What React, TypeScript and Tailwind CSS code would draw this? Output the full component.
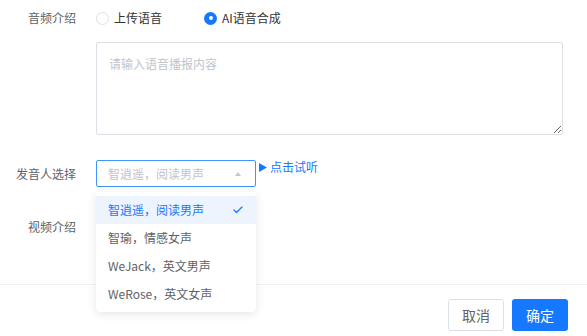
import { Check } from "lucide-react"

const voices = ["智逍遥，阅读男声", "智瑜，情感女声", "WeJack，英文男声", "WeRose，英文女声"]

export default function App() {
  return (
    <div className="relative w-[587px] h-[336px] bg-white text-[12px] font-['Noto_Sans_CJK_SC',sans-serif] text-[#606266]">
      <div className="h-[284px] pt-[8px]">
        {/* 音频介绍 */}
        <div className="flex items-center h-[20px]">
          <div className="w-[76px] mr-[20px] text-right">音频介绍</div>
          <label className="flex items-center text-[#333]">
            <span className="w-[13px] h-[13px] rounded-full border border-[#dcdfe6] bg-white" />
            <span className="ml-[5px]">上传语音</span>
          </label>
          <label className="flex items-center ml-[42px] text-[#333]">
            <span className="w-[13px] h-[13px] rounded-full bg-[#1677ff] flex items-center justify-center">
              <span className="w-[4px] h-[4px] rounded-full bg-white" />
            </span>
            <span className="ml-[5px]">AI语音合成</span>
          </label>
        </div>

        <div className="mt-[14px] ml-[96px]">
          <textarea
            className="block w-[467px] h-[93px] border border-[#dcdfe6] rounded-[2px] px-[12px] pt-[12px] leading-[18px] outline-none placeholder:text-[#c0c4cc] text-[12px]"
            placeholder="请输入语音播报内容"
          />
        </div>

        {/* 发音人选择 */}
        <div className="flex items-start mt-[25px]">
          <div className="w-[76px] mr-[20px] text-right leading-[27px]">发音人选择</div>
          <div className="relative">
            <div className="w-[160px] h-[27px] border border-[#4096ff] rounded-[2px] flex items-center pl-[11px] pr-[14px] justify-between">
              <span className="text-[#c0c4cc]">智逍遥，阅读男声</span>
              <svg width="6" height="4" viewBox="0 0 6 4">
                <path d="M3 0 L6 4 L0 4 Z" fill="#c0c4cc" />
              </svg>
            </div>
            <div className="absolute left-0 top-[32px] z-10 w-[160px] bg-white rounded-[4px] py-[4px] shadow-[0_2px_10px_rgba(0,0,0,0.1)]">
              {voices.map((v, i) => (
                <div
                  key={v}
                  className={
                    i === 0
                      ? "h-[28px] flex items-center justify-between pl-[12px] pr-[12px] bg-[#edf4fe] text-[#1677ff]"
                      : "h-[28px] flex items-center pl-[12px] text-[#606266]"
                  }
                >
                  <span>{v}</span>
                  {i === 0 && <Check size={12} strokeWidth={2.5} className="text-[#1677ff]" />}
                </div>
              ))}
            </div>
          </div>
          <button className="flex items-center ml-[3px] mt-[1px] text-[#1677ff] leading-[12px]">
            <svg width="8" height="9" viewBox="0 0 8 9" className="mr-[3px]">
              <path d="M0 0 L8 4.5 L0 9 Z" fill="#1677ff" />
            </svg>
            点击试听
          </button>
        </div>

        {/* 视频介绍 */}
        <div className="flex items-center h-[20px] mt-[30px]">
          <div className="w-[76px] mr-[20px] text-right">视频介绍</div>
        </div>
      </div>

      <div className="border-t border-[#f0f0f0] flex justify-end gap-[8px] pt-[14px] pr-[19px]">
        <button className="w-[56px] h-[32px] border border-[#dcdfe6] rounded-[3px] text-[14px] text-[#606266] bg-white">
          取消
        </button>
        <button className="w-[56px] h-[32px] rounded-[3px] text-[14px] text-white bg-[#1677ff]">
          确定
        </button>
      </div>
    </div>
  )
}
